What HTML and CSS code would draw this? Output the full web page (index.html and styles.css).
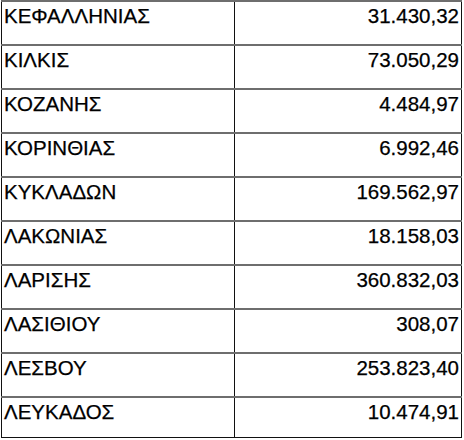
FILE: index.html
```html
<!DOCTYPE html>
<html lang="el">
<head>
<meta charset="utf-8">
<link rel="stylesheet" href="styles.css">
</head>
<body>
<div class="table">
  <div class="row"><div class="name">ΚΕΦΑΛΛΗΝΙΑΣ</div><div class="val">31.430,32</div></div>
  <div class="row"><div class="name">ΚΙΛΚΙΣ</div><div class="val">73.050,29</div></div>
  <div class="row"><div class="name">ΚΟΖΑΝΗΣ</div><div class="val">4.484,97</div></div>
  <div class="row"><div class="name">ΚΟΡΙΝΘΙΑΣ</div><div class="val">6.992,46</div></div>
  <div class="row"><div class="name">ΚΥΚΛΑΔΩΝ</div><div class="val">169.562,97</div></div>
  <div class="row"><div class="name">ΛΑΚΩΝΙΑΣ</div><div class="val">18.158,03</div></div>
  <div class="row"><div class="name">ΛΑΡΙΣΗΣ</div><div class="val">360.832,03</div></div>
  <div class="row"><div class="name">ΛΑΣΙΘΙΟΥ</div><div class="val">308,07</div></div>
  <div class="row"><div class="name">ΛΕΣΒΟΥ</div><div class="val">253.823,40</div></div>
  <div class="row last"><div class="name">ΛΕΥΚΑΔΟΣ</div><div class="val">10.474,91</div></div>
</div>
</body>
</html>
```
FILE: styles.css
```css
html, body {
  margin: 0;
  padding: 0;
  background: #ffffff;
}
body {
  font-family: "Liberation Sans", Arial, sans-serif;
  color: #000000;
}
.table {
  width: 461px;
  margin-left: 1px;
  display: flex;
  flex-direction: column;
}
.row {
  display: flex;
  height: 44px;
  border-top: 2px solid #6e6e6e;
  box-sizing: border-box;
}
.row.last {
  border-bottom: 1px solid #111;
  height: 42px;
}
.name, .val {
  font-size: 20.5px;
  line-height: 24px;
  padding-top: 2px;
  box-sizing: border-box;
  -webkit-text-stroke: 0.25px #000;
}
.name {
  width: 234px;
  border-left: 1px solid #111;
  border-right: 1px solid #111;
  padding-left: 2px;
}
.val {
  flex: 1;
  text-align: right;
  border-right: 1px solid #111;
  padding-right: 2px;
}
```
